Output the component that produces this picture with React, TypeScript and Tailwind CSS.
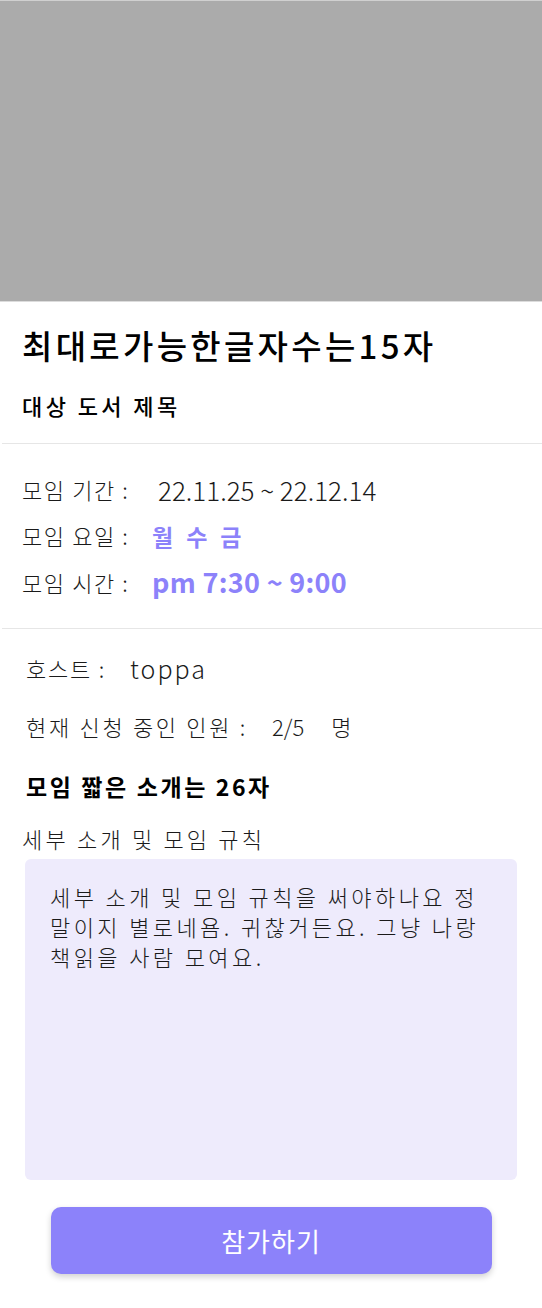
import React from "react";

const font = { fontFamily: '"Noto Sans CJK KR", "Noto Sans", sans-serif' };

function InfoRow({ label, children }: { label: string; children: React.ReactNode }) {
  return (
    <div className="flex items-center h-[46.5px]">
      <span className="w-[130px] text-[22px] font-light text-[#1a1a1a] tracking-[1.6px]">{label}</span>
      {children}
    </div>
  );
}

function Divider() {
  return <div className="ml-[2px] h-px bg-[#e6e6e6]" />;
}

export default function App() {
  return (
    <div className="w-[542px] min-h-[1308px] bg-white flex flex-col" style={font}>
      {/* Cover image */}
      <div className="h-[302px] bg-[#ababab] border-t border-[#d0d0d0] border-b border-b-[#dcdcdc]" />

      {/* Title */}
      <div className="px-[22px] pt-[21px] pb-[23px]">
        <h1 className="text-[33px] font-medium text-black leading-[44px] tracking-[3.3px]">최대로가능한글자수는15자</h1>
        <p className="mt-[23px] text-[22px] font-medium text-black leading-[30px] tracking-[3.4px]">대상 도서 제목</p>
      </div>
      <Divider />

      {/* Schedule */}
      <div className="px-[22px] pt-[22px] pb-[22px] flex flex-col">
        <InfoRow label="모임 기간 :">
          <span className="ml-[6px] text-[26px] font-light text-[#1a1a1a]">22.11.25 ~ 22.12.14</span>
        </InfoRow>
        <InfoRow label="모임 요일 :">
          <span className="flex gap-[13px] text-[23px] font-bold text-[#8c82fa]">
            <span>월</span>
            <span>수</span>
            <span>금</span>
          </span>
        </InfoRow>
        <InfoRow label="모임 시간 :">
          <span className="text-[27px] font-bold text-[#8c82fa] tracking-[0.3px]">pm 7:30 ~ 9:00</span>
        </InfoRow>
      </div>
      <Divider />

      {/* Host & intro */}
      <div className="pt-[20px] flex flex-col">
        <div className="px-[26px] flex items-center h-[40px] text-[22px] font-light text-[#1a1a1a]">
          <span className="tracking-[1.8px]">호스트 :</span>
          <span className="ml-[24px] text-[25px] tracking-[2px]">toppa</span>
        </div>
        <div className="px-[26px] mt-[18px] flex items-center h-[40px] text-[22px] font-light text-[#1a1a1a]">
          <span className="tracking-[2.7px]">현재 신청 중인 인원 :</span>
          <span className="ml-[24px]">2/5</span>
          <span className="ml-[27px]">명</span>
        </div>
        <p className="px-[26px] mt-[19px] text-[23px] font-bold text-black leading-[40px] tracking-[2.6px]">모임 짧은 소개는 26자</p>
        <p className="px-[22px] mt-[17px] text-[22px] font-light text-[#1a1a1a] leading-[30px] tracking-[3.2px]">세부 소개 및 모임 규칙</p>

        <div className="mx-[25px] mt-[6px] h-[321px] rounded-[6px] bg-[#eeebfc] px-[25px] pt-[22px]">
          <p className="text-[22px] font-light text-[#1a1a1a] leading-[30px] tracking-[3.4px] whitespace-nowrap">
            세부 소개 및 모임 규칙을 써야하나요 정<br />
            말이지 별로네욤. 귀찮거든요. 그냥 나랑<br />
            책읽을 사람 모여요.
          </p>
        </div>

        <div className="flex justify-center mt-[27px]">
          <button className="w-[441px] h-[67px] rounded-[10px] bg-[#8c82fa] text-white text-[26px] font-normal tracking-[1px] shadow-[0_3px_6px_rgba(0,0,0,0.18)]">
            참가하기
          </button>
        </div>
      </div>
    </div>
  );
}
